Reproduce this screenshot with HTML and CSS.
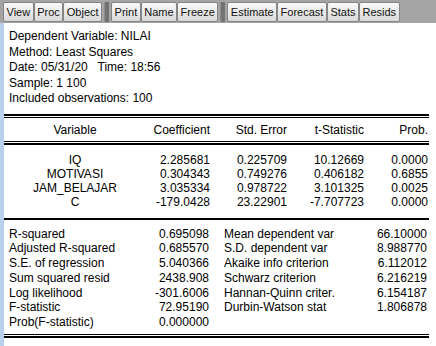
FILE: index.html
```html
<!DOCTYPE html>
<html lang="en">
<head>
  <meta charset="UTF-8">
  <title>Equation: NILAI</title>
  <link rel="stylesheet" href="styles.css">
</head>
<body>

<!-- Toolbar -->
<div class="toolbar">
  <span class="btn">View</span>
  <span class="btn">Proc</span>
  <span class="btn">Object</span>
  <span class="sep"></span>
  <span class="btn">Print</span>
  <span class="btn">Name</span>
  <span class="btn">Freeze</span>
  <span class="sep"></span>
  <span class="btn">Estimate</span>
  <span class="btn">Forecast</span>
  <span class="btn">Stats</span>
  <span class="btn">Resids</span>
</div>

<div class="output">
  <div class="info">
    <div>Dependent Variable: NILAI</div>
    <div>Method: Least Squares</div>
    <div class="keep">Date: 05/31/20   Time: 18:56</div>
    <div>Sample: 1 100</div>
    <div>Included observations: 100</div>
  </div>

  <div class="coef-head">
    <span class="var">Variable</span>
    <span class="num">Coefficient</span>
    <span class="num">Std. Error</span>
    <span class="num">t-Statistic</span>
    <span class="num">Prob.</span>
  </div>

  <div class="coef-body">
    <span class="var">IQ</span>
    <span class="num">2.285681</span>
    <span class="num">0.225709</span>
    <span class="num">10.12669</span>
    <span class="num">0.0000</span>

    <span class="var">MOTIVASI</span>
    <span class="num">0.304343</span>
    <span class="num">0.749276</span>
    <span class="num">0.406182</span>
    <span class="num">0.6855</span>

    <span class="var">JAM_BELAJAR</span>
    <span class="num">3.035334</span>
    <span class="num">0.978722</span>
    <span class="num">3.101325</span>
    <span class="num">0.0025</span>

    <span class="var">C</span>
    <span class="num">-179.0428</span>
    <span class="num">23.22901</span>
    <span class="num">-7.707723</span>
    <span class="num">0.0000</span>
  </div>

  <div class="stats">
    <span class="label">R-squared</span>
    <span class="num">0.695098</span>
    <span class="label2">Mean dependent var</span>
    <span class="num">66.10000</span>

    <span class="label">Adjusted R-squared</span>
    <span class="num">0.685570</span>
    <span class="label2">S.D. dependent var</span>
    <span class="num">8.988770</span>

    <span class="label">S.E. of regression</span>
    <span class="num">5.040366</span>
    <span class="label2">Akaike info criterion</span>
    <span class="num">6.112012</span>

    <span class="label">Sum squared resid</span>
    <span class="num">2438.908</span>
    <span class="label2">Schwarz criterion</span>
    <span class="num">6.216219</span>

    <span class="label">Log likelihood</span>
    <span class="num">-301.6006</span>
    <span class="label2">Hannan-Quinn criter.</span>
    <span class="num">6.154187</span>

    <span class="label">F-statistic</span>
    <span class="num">72.95190</span>
    <span class="label2">Durbin-Watson stat</span>
    <span class="num">1.806878</span>

    <span class="label">Prob(F-statistic)</span>
    <span class="num">0.000000</span>
    <span class="label2"></span>
    <span class="num"></span>
  </div>
</div>

</body>
</html>
```

FILE: styles.css
```css
/* Basic styling */
body {
  margin: 0;
  padding: 0;
  background-color: #fff;
  font-family: 'Liberation Sans', Arial, sans-serif;
  font-size: 12px;
  color: #000;
}

/* Toolbar */
.toolbar {
  display: flex;
  align-items: flex-start;
  height: 20px;
  padding: 2px 0 1px 3px;
  background-color: #a4a4a4;
}
.btn {
  height: 18px;
  line-height: 18px;
  padding: 0 2.5px;
  border: 1px solid #858585;
  border-radius: 2px;
  background: linear-gradient(#f9f9f9, #d9d9d9);
  font-size: 11px;
  color: #111;
}
.sep {
  width: 5px;
  height: 20px;
  margin: 0 2px;
  background-color: #727272;
  border-left: 1px solid #8e8e8e;
  box-sizing: border-box;
}

/* Output area */
.output {
  border-left: 4px solid #b9d1ea;
  margin-right: 7px;
  height: 323px;
}
.info {
  padding: 6px 0 7px 5px;
  line-height: 15.5px;
}
.keep {
  white-space: pre;
}

.coef-head,
.coef-body {
  display: grid;
  grid-template-columns: 142px 64px 77px 77px 64px;
}
.coef-head {
  border-top: 2px solid #000;
  border-bottom: 2px solid #000;
  padding: 7px 0 6px;
  line-height: 14px;
  position: relative;
}
.coef-head::before,
.coef-head::after {
  content: "";
  position: absolute;
  left: 0;
  right: 0;
  height: 1px;
  background-color: #000;
}
.coef-head::before {
  top: 1px;
}
.coef-head::after {
  bottom: 1px;
}
.coef-body {
  padding: 8px 0 9px;
  line-height: 14px;
  border-bottom: 2px solid #000;
}
.var {
  text-align: center;
}
.num {
  text-align: right;
}

.stats {
  display: grid;
  grid-template-columns: 140px 65px 140px 78px;
  padding: 7px 0 6px;
  line-height: 14.8px;
  border-bottom: 2px solid #000;
  position: relative;
}
.stats::after {
  content: "";
  position: absolute;
  left: 0;
  right: 0;
  bottom: 1px;
  height: 1px;
  background-color: #000;
}
.label {
  padding-left: 5px;
}
.label2 {
  padding-left: 15px;
}
```
